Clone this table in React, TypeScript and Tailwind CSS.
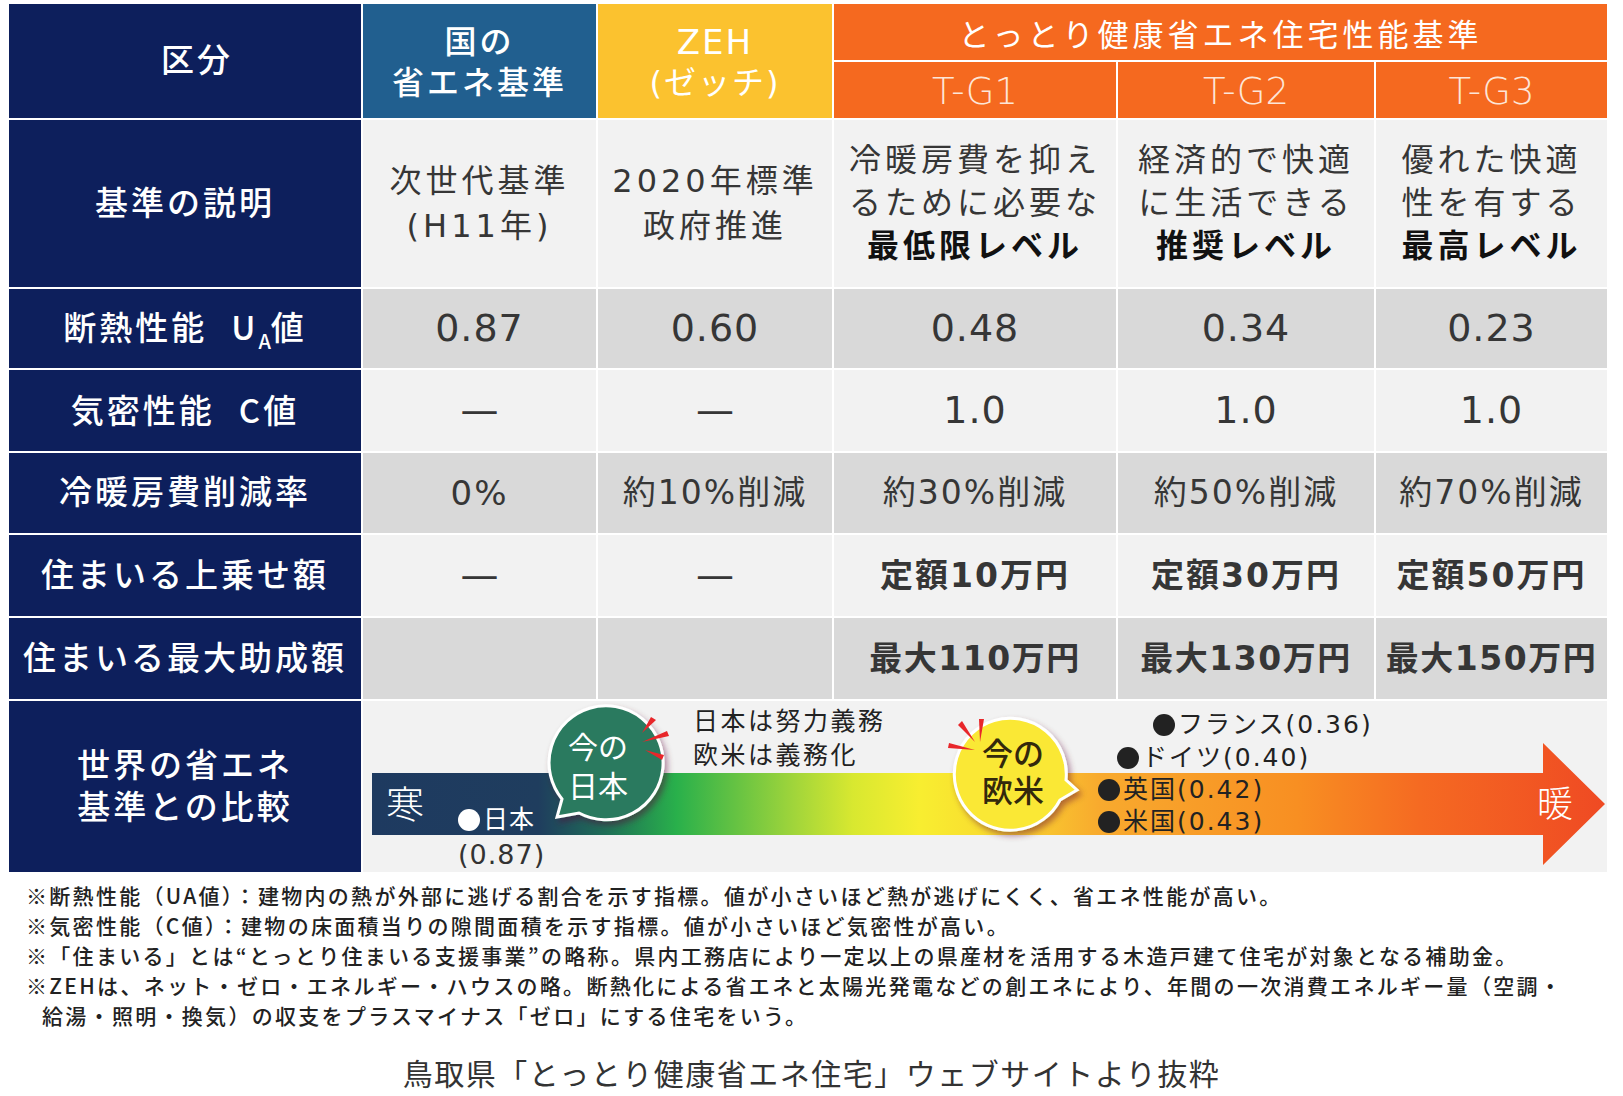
import React from "react";

const JP = "font-['Noto_Sans_CJK_JP',sans-serif]";

type Kids = { children?: React.ReactNode };

function Label({ children }: Kids) {
  return (
    <div className="flex flex-col items-center justify-center bg-[#0d1f5c] text-[33px] leading-[42px] font-medium tracking-[3px] text-white">
      {children}
    </div>
  );
}

function Cell({ children, gray = false, className = "" }: Kids & { gray?: boolean; className?: string }) {
  return (
    <div
      className={`flex flex-col items-center justify-center text-[#363636] ${gray ? "bg-[#d9d9d9]" : "bg-[#f2f2f2]"} ${className}`}
    >
      {children}
    </div>
  );
}

function Dash({ gray = false }: { gray?: boolean }) {
  return (
    <Cell gray={gray} className="text-[38px] text-[#555]">
      —
    </Cell>
  );
}

// black bullet drawn as a circle
function Dot() {
  return <span className="mr-[3px] inline-block h-[22px] w-[22px] rounded-full bg-current align-[-3px]" />;
}

function Comparison() {
  return (
    <div className="relative col-span-5 overflow-hidden bg-[#f2f2f2]">
      <svg className="absolute inset-0" width="1244" height="171" viewBox="0 0 1244 171">
        <defs>
          <linearGradient id="heat" gradientUnits="userSpaceOnUse" x1="9" y1="0" x2="1242" y2="0">
            <stop offset="0" stopColor="#1e3a60" />
            <stop offset="0.135" stopColor="#1f3d5e" />
            <stop offset="0.19" stopColor="#1f6f57" />
            <stop offset="0.247" stopColor="#29b04b" />
            <stop offset="0.345" stopColor="#a4d63a" />
            <stop offset="0.39" stopColor="#d8e830" />
            <stop offset="0.444" stopColor="#f8ee30" />
            <stop offset="0.517" stopColor="#f9d630" />
            <stop offset="0.59" stopColor="#f8aa2e" />
            <stop offset="0.75" stopColor="#f88f22" />
            <stop offset="0.85" stopColor="#f56a22" />
            <stop offset="1" stopColor="#ef4a23" />
          </linearGradient>
          <filter id="shade" x="-20%" y="-20%" width="150%" height="150%">
            <feDropShadow dx="3" dy="4" stdDeviation="3" floodColor="#5a1030" floodOpacity="0.45" />
          </filter>
        </defs>
        <path d="M9 72 H1180 V42 L1242 103 L1180 164 V134 H9 Z" fill="url(#heat)" />

        <path
          d="M199 98 A57 57 0 1 1 216 112 L194 116 Z"
          fill="#2a7a5e"
          stroke="#ffffff"
          strokeWidth="3"
          filter="url(#shade)"
        />
        <g fill="#e8262a">
          <polygon points="279,32 288,16 293,19" />
          <polygon points="279,41 304,30 306,35" />
          <polygon points="282,49 301,54 299,59" />
        </g>

        <path
          d="M703 79 A56 56 0 1 0 697 99 L714 89 Z"
          fill="#fae835"
          stroke="#ffffff"
          strokeWidth="3"
          filter="url(#shade)"
        />
        <g fill="#e8262a">
          <polygon points="612,41 595,24 599,20" />
          <polygon points="617,41 616,18 621,18" />
          <polygon points="612,49 585,47 586,42" />
        </g>
      </svg>

      <span className="absolute left-[23px] top-[85px] text-[38px] leading-[38px] font-light text-white">寒</span>
      <span className="absolute left-[95px] top-[105px] text-[25px] leading-[28px] tracking-[1px] text-white">
        <Dot />
        日本
      </span>
      <span className="absolute left-[95px] top-[140px] text-[27px] leading-[28px] tracking-[1px] text-[#333]">(0.87)</span>

      <div className="absolute left-[195px] top-[27px] w-[80px] text-center text-[30px] leading-[39px] text-white">
        <div>今の</div>
        <div>日本</div>
      </div>

      <div className="absolute left-[330px] top-[4px] text-[25px] leading-[34px] tracking-[2.5px] text-[#222]">
        <div>日本は努力義務</div>
        <div>欧米は義務化</div>
      </div>

      <div className="absolute left-[610px] top-[35px] w-[80px] text-center text-[31px] leading-[37px] font-medium text-[#33280c]">
        <div>今の</div>
        <div>欧米</div>
      </div>

      <div className="absolute left-[790px] top-[10px] text-[25px] leading-[28px] tracking-[2px] text-[#222]">
        <Dot />
        フランス(0.36)
      </div>
      <div className="absolute left-[754px] top-[43px] text-[25px] leading-[28px] tracking-[2px] text-[#222]">
        <Dot />
        ドイツ(0.40)
      </div>
      <div className="absolute left-[735px] top-[75px] text-[25px] leading-[28px] tracking-[2px] text-[#222]">
        <Dot />
        英国(0.42)
      </div>
      <div className="absolute left-[735px] top-[107px] text-[25px] leading-[28px] tracking-[2px] text-[#222]">
        <Dot />
        米国(0.43)
      </div>

      <span className="absolute left-[1174px] top-[86px] text-[36px] leading-[36px] font-light text-white">暖</span>
    </div>
  );
}

const notes = [
  "※断熱性能（UA値）：建物内の熱が外部に逃げる割合を示す指標。値が小さいほど熱が逃げにくく、省エネ性能が高い。",
  "※気密性能（C値）：建物の床面積当りの隙間面積を示す指標。値が小さいほど気密性が高い。",
  "※「住まいる」とは“とっとり住まいる支援事業”の略称。県内工務店により一定以上の県産材を活用する木造戸建て住宅が対象となる補助金。",
  "※ZEHは、ネット・ゼロ・エネルギー・ハウスの略。断熱化による省エネと太陽光発電などの創エネにより、年間の一次消費エネルギー量（空調・",
];

export default function App() {
  return (
    <div className="min-h-screen bg-white pt-[4px] pl-[9px] font-['DejaVu_Sans','Noto_Sans_CJK_JP',sans-serif]">
      <div className="grid w-[1598px] grid-cols-[352px_233px_234px_282px_256px_231px] grid-rows-[56px_56px_167px_79px_81px_80px_81px_81px_171px] gap-[2px]">
        {/* header */}
        <div className="row-span-2 flex items-center justify-center bg-[#0d1f5c] pl-[24px] text-[33px] font-medium tracking-[3px] text-white">
          区分
        </div>
        <div className="row-span-2 flex flex-col items-center justify-center bg-[#215f8f] pt-[4px] text-[32px] leading-[41px] font-medium tracking-[3px] text-white">
          <div>国の</div>
          <div>省エネ基準</div>
        </div>
        <div className="row-span-2 flex flex-col items-center justify-center bg-[#fbc22f] pt-[4px] text-[32px] leading-[41px] tracking-[2px] text-white">
          <div className="text-[34px]">ZEH</div>
          <div>(ゼッチ)</div>
        </div>
        <div className="col-span-3 flex items-center justify-center bg-[#f5691f] pt-[6px] text-[31px] tracking-[4px] text-white">
          とっとり健康省エネ住宅性能基準
        </div>
        <div className="flex items-center justify-center bg-[#f5691f] pt-[4px] text-[37px] font-extralight text-[#fde6d8]">T-G1</div>
        <div className="flex items-center justify-center bg-[#f5691f] pt-[4px] text-[37px] font-extralight text-[#fde6d8]">T-G2</div>
        <div className="flex items-center justify-center bg-[#f5691f] pt-[4px] text-[37px] font-extralight text-[#fde6d8]">T-G3</div>

        {/* 基準の説明 */}
        <Label>基準の説明</Label>
        <Cell className="text-[32px] leading-[45px] tracking-[4px]">
          <div>次世代基準</div>
          <div>(H11年)</div>
        </Cell>
        <Cell className="text-[32px] leading-[45px] tracking-[4px]">
          <div>2020年標準</div>
          <div>政府推進</div>
        </Cell>
        <Cell className="text-[32px] leading-[43px] tracking-[4px]">
          <div>冷暖房費を抑え</div>
          <div>るために必要な</div>
          <div className="font-bold text-[#111]">最低限レベル</div>
        </Cell>
        <Cell className="text-[32px] leading-[43px] tracking-[4px]">
          <div>経済的で快適</div>
          <div>に生活できる</div>
          <div className="font-bold text-[#111]">推奨レベル</div>
        </Cell>
        <Cell className="text-[32px] leading-[43px] tracking-[4px]">
          <div>優れた快適</div>
          <div>性を有する</div>
          <div className="font-bold text-[#111]">最高レベル</div>
        </Cell>

        {/* 断熱性能 */}
        <Label>
          <div>
            断熱性能
            <span className={`ml-[24px] ${JP}`}>U</span>
            <span className={`relative top-[9px] text-[20px] tracking-normal ${JP}`}>A</span>値
          </div>
        </Label>
        <Cell gray className="text-[38px] tracking-[1px]">0.87</Cell>
        <Cell gray className="text-[38px] tracking-[1px]">0.60</Cell>
        <Cell gray className="text-[38px] tracking-[1px]">0.48</Cell>
        <Cell gray className="text-[38px] tracking-[1px]">0.34</Cell>
        <Cell gray className="text-[38px] tracking-[1px]">0.23</Cell>

        {/* 気密性能 */}
        <Label>
          <div>
            気密性能<span className={`ml-[24px] ${JP}`}>C</span>値
          </div>
        </Label>
        <Dash />
        <Dash />
        <Cell className="text-[38px] tracking-[1px]">1.0</Cell>
        <Cell className="text-[38px] tracking-[1px]">1.0</Cell>
        <Cell className="text-[38px] tracking-[1px]">1.0</Cell>

        {/* 冷暖房費削減率 */}
        <Label>冷暖房費削減率</Label>
        <Cell gray className="text-[34px] tracking-[2px]">0%</Cell>
        <Cell gray className="text-[33px] tracking-[2px]">約10%削減</Cell>
        <Cell gray className="text-[33px] tracking-[2px]">約30%削減</Cell>
        <Cell gray className="text-[33px] tracking-[2px]">約50%削減</Cell>
        <Cell gray className="text-[33px] tracking-[2px]">約70%削減</Cell>

        {/* 住まいる上乗せ額 */}
        <Label>住まいる上乗せ額</Label>
        <Dash />
        <Dash />
        <Cell className="text-[33px] font-bold tracking-[2px] text-[#111]">定額10万円</Cell>
        <Cell className="text-[33px] font-bold tracking-[2px] text-[#111]">定額30万円</Cell>
        <Cell className="text-[33px] font-bold tracking-[2px] text-[#111]">定額50万円</Cell>

        {/* 住まいる最大助成額 */}
        <Label>住まいる最大助成額</Label>
        <Cell gray />
        <Cell gray />
        <Cell gray className="text-[33px] font-bold tracking-[1.5px] text-[#111]">最大110万円</Cell>
        <Cell gray className="text-[33px] font-bold tracking-[1.5px] text-[#111]">最大130万円</Cell>
        <Cell gray className="text-[33px] font-bold tracking-[1.5px] text-[#111]">最大150万円</Cell>

        {/* 世界の省エネ基準との比較 */}
        <Label>
          <div>世界の省エネ</div>
          <div>基準との比較</div>
        </Label>
        <Comparison />
      </div>

      <div className={`mt-[8px] pl-[17px] text-[21px] leading-[30px] font-medium tracking-[2.3px] text-[#222] ${JP}`}>
        {notes.map((n) => (
          <div key={n} className="whitespace-nowrap">
            {n}
          </div>
        ))}
        <div className="whitespace-nowrap pl-[16px]">給湯・照明・換気）の収支をプラスマイナス「ゼロ」にする住宅をいう。</div>
      </div>

      <div className={`mt-[22px] w-[1605px] text-center text-[30px] leading-[40px] tracking-[1.5px] text-[#333] ${JP}`}>
        鳥取県「とっとり健康省エネ住宅」ウェブサイトより抜粋
      </div>
    </div>
  );
}
